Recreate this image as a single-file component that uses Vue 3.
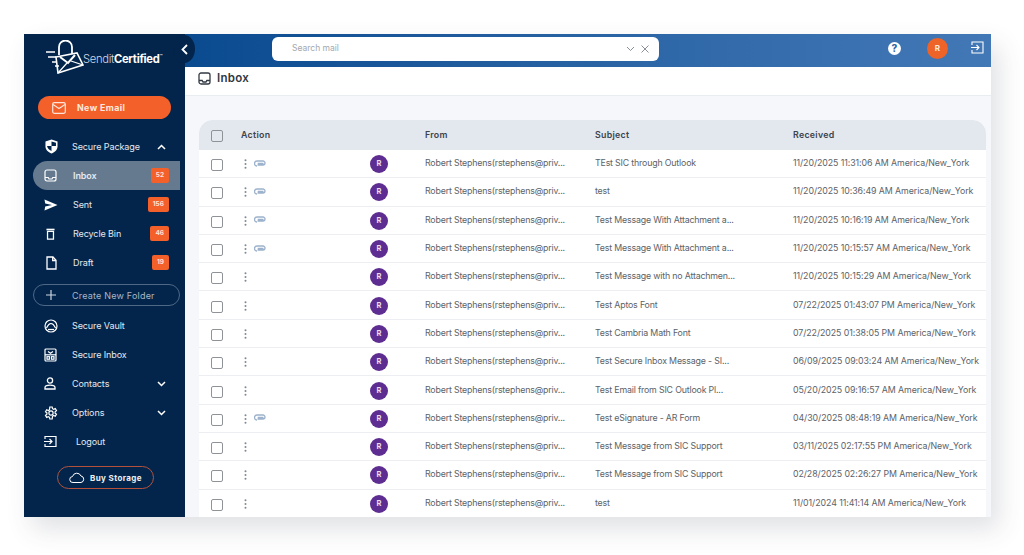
<script setup>
const nav1 = [
  { label: 'Inbox', icon: 'inbox', badge: '52', active: true },
  { label: 'Sent', icon: 'sent', badge: '156' },
  { label: 'Recycle Bin', icon: 'bin', badge: '46' },
  { label: 'Draft', icon: 'draft', badge: '19' },
]
const from = 'Robert Stephens(rstephens@priv...'
const rows = [
  ['TEst SIC through Outlook', '11/20/2025 11:31:06 AM America/New_York', true],
  ['test', '11/20/2025 10:36:49 AM America/New_York', true],
  ['Test Message With Attachment a...', '11/20/2025 10:16:19 AM America/New_York', true],
  ['Test Message With Attachment a...', '11/20/2025 10:15:57 AM America/New_York', true],
  ['Test Message with no Attachmen...', '11/20/2025 10:15:29 AM America/New_York', false],
  ['Test Aptos Font', '07/22/2025 01:43:07 PM America/New_York', false],
  ['Test Cambria Math Font', '07/22/2025 01:38:05 PM America/New_York', false],
  ['Test Secure Inbox Message - SI...', '06/09/2025 09:03:24 AM America/New_York', false],
  ['Test Email from SIC Outlook Pl...', '05/20/2025 09:16:57 AM America/New_York', false],
  ['Test eSignature - AR Form', '04/30/2025 08:48:19 AM America/New_York', true],
  ['Test Message from SIC Support', '03/11/2025 02:17:55 PM America/New_York', false],
  ['Test Message from SIC Support', '02/28/2025 02:26:27 PM America/New_York', false],
  ['test', '11/01/2024 11:41:14 AM America/New_York', false],
]
</script>

<template>
  <div class="page">
    <div class="app">
      <aside class="side">
        <div class="logo">
          <svg width="40" height="34" viewBox="0 0 40 34" fill="none" stroke="#fff" stroke-width="1.600">
            <path d="M15 15V7a6.500 6.500 0 0 1 13 0v7" stroke-width="1.800" />
            <path d="M12 17l21-4 6 12-25 8z" fill="#03254c" />
            <path d="M16 17l8 6 7-8" stroke-width="2" />
            <path d="M14 33l9-10M39 25l-12-4" stroke-width="1.200" />
            <path d="M2 12h9M4 17h8M8 22h5M11 26h4" stroke-width="1.300" />
          </svg>
          <span class="brand"><span class="thin">Sendit</span><b>Certified</b><sup>™</sup></span>
        </div>
        <button class="new-email">
          <svg width="14" height="12" viewBox="0 0 14 12" fill="none" stroke="#ffe5d9" stroke-width="1.200">
            <rect x="0.700" y="0.700" width="12.600" height="10.600" rx="1.500" />
            <path d="M1 2.500l6 4 6-4" />
          </svg>
          <span>New Email</span>
        </button>

        <div class="item pkg">
          <svg class="ic shield" width="13" height="15" viewBox="0 0 14 15">
            <path d="M7 0l6.500 2.200v5c0 3.700-2.800 6.500-6.500 7.800C3.300 13.700.5 10.900.5 7.200v-5z" fill="#fff" />
            <path d="M7 2v5h4.800V3.500zM7 7H2.200c.3 2.500 2.300 4.300 4.800 5.400z" fill="#03254c" />
          </svg>
          <span class="lbl">Secure Package</span>
          <svg class="chev" width="9" height="6" viewBox="0 0 9 6" fill="none" stroke="#fff" stroke-width="1.500"><path d="M1 5l3.500-3.500L8 5" /></svg>
        </div>

        <div class="group">
          <div v-for="n in nav1" :key="n.label" class="sub" :class="{ active: n.active }">
            <svg v-if="n.icon === 'inbox'" class="ic" width="13" height="13" viewBox="0 0 13 13" fill="none" stroke="#fff" stroke-width="1.200">
              <rect x="1" y="1" width="11" height="11" rx="2" /><path d="M1 8.500h3.200l.8 1.500h3l.8-1.500H12" />
            </svg>
            <svg v-else-if="n.icon === 'sent'" class="ic" width="14" height="12" viewBox="0 0 14 12">
              <path d="M0.500 0.500L13.500 6 0.500 11.500 1.200 7.500 8 6 1.200 4.500z" fill="#fff" />
            </svg>
            <svg v-else-if="n.icon === 'bin'" class="ic narrow" width="9" height="12" viewBox="0 0 10 13" fill="none" stroke="#fff" stroke-width="1.400">
              <path d="M0.500 1.500h9" stroke-width="1.800" /><path d="M1.700 3.500h6.600v8.800H1.700z" />
            </svg>
            <svg v-else class="ic narrow" width="11" height="14" viewBox="0 0 11 14" fill="none" stroke="#fff" stroke-width="1.300">
              <path d="M1 1h6l3 3.200V13H1z" /><path d="M6.700 1v3.500H10" />
            </svg>
            <span class="sub-lbl">{{ n.label }}</span>
            <span class="badge">{{ n.badge }}</span>
          </div>
        </div>

        <div class="create">
          <svg width="10" height="10" viewBox="0 0 10 10" stroke="#cdd6e0" stroke-width="1.200"><path d="M5 0v10M0 5h10" /></svg>
          <span>Create New Folder</span>
        </div>

        <div class="item">
          <svg class="ic" width="14" height="14" viewBox="0 0 14 14" fill="none" stroke="#fff" stroke-width="1.200">
            <circle cx="7" cy="7" r="6" /><path d="M2.500 9c1-2 2-4.500 4.500-4.500S10.500 7 11.500 9" /><path d="M4 10.500h6" />
          </svg>
          <span class="lbl">Secure Vault</span>
        </div>
        <div class="item">
          <svg class="ic" width="13" height="14" viewBox="0 0 13 14" fill="none" stroke="#fff" stroke-width="1.200">
            <rect x="1" y="1" width="11" height="12" rx="1" /><path d="M1 6.800h11" /><path d="M4 3.500l2.500 1.700L9 3.500" /><rect x="3" y="8.700" width="2.500" height="2.500" /><rect x="7.500" y="8.700" width="2.500" height="2.500" />
          </svg>
          <span class="lbl">Secure Inbox</span>
        </div>
        <div class="item">
          <svg class="ic" width="12" height="13" viewBox="0 0 12 13" fill="none" stroke="#fff" stroke-width="1.300">
            <circle cx="6" cy="3.500" r="2.600" /><path d="M1 12v-1.500C1 9 2.500 8.200 6 8.200s5 .8 5 2.300V12z" />
          </svg>
          <span class="lbl">Contacts</span>
          <svg class="chev" width="9" height="6" viewBox="0 0 9 6" fill="none" stroke="#fff" stroke-width="1.500"><path d="M1 1l3.500 3.500L8 1" /></svg>
        </div>
        <div class="item">
          <svg class="ic" width="14" height="14" viewBox="0 0 14 14" fill="none" stroke="#fff" stroke-width="1.200">
            <circle cx="7" cy="7" r="2.100" /><path d="M5.800 1h2.400l.3 1.700 1.200.6 1.600-.7 1.200 2-1.400 1.100v1.400l1.400 1.100-1.200 2-1.600-.7-1.200.6L8.200 13H5.800l-.3-1.700-1.200-.6-1.600.7-1.200-2 1.400-1.100V6.900L1.500 5.800l1.200-2 1.600.7 1.200-.6z" />
          </svg>
          <span class="lbl">Options</span>
          <svg class="chev" width="9" height="6" viewBox="0 0 9 6" fill="none" stroke="#fff" stroke-width="1.500"><path d="M1 1l3.500 3.500L8 1" /></svg>
        </div>
        <div class="item">
          <svg class="ic" width="13" height="13" viewBox="0 0 13 13" fill="none" stroke="#fff" stroke-width="1.200">
            <path d="M1 4V1.500h11v10H1V9" /><path d="M0 6.500h8M5.500 4l2.500 2.500L5.500 9" />
          </svg>
          <span class="lbl logout">Logout</span>
        </div>

        <div class="buy">
          <svg width="16" height="11" viewBox="0 0 16 11" fill="none" stroke="#fff" stroke-width="1"><path d="M4 10.500a3 3 0 0 1-.5-6A4.500 4.500 0 0 1 12 4a3.300 3.300 0 0 1 0 6.500z" /></svg>
          <span>Buy Storage</span>
        </div>
      </aside>

      <main class="main">
        <header class="top">
          <button class="collapse">
            <svg width="7" height="11" viewBox="0 0 7 11" fill="none" stroke="#fff" stroke-width="1.800"><path d="M6 1L1.500 5.500 6 10" /></svg>
          </button>
          <div class="search">
            <span class="ph">Search mail</span>
            <svg width="9" height="6" viewBox="0 0 9 6" fill="none" stroke="#8a9099" stroke-width="1"><path d="M1 1l3.500 3.500L8 1" /></svg>
            <svg width="8" height="8" viewBox="0 0 8 8" stroke="#8a9099" stroke-width="1"><path d="M.5.500l7 7M7.500.500l-7 7" /></svg>
          </div>
          <div class="right">
            <span class="help">?</span>
            <span class="me">R</span>
            <svg class="exit" width="13" height="13" viewBox="0 0 13 13" fill="none" stroke="#fff" stroke-width="1.100">
              <path d="M1 4V1h11v11H1V9" /><path d="M0 6.500h8M5.500 4l2.500 2.500L5.500 9" />
            </svg>
          </div>
        </header>

        <div class="title">
          <svg width="13" height="13" viewBox="0 0 13 13" fill="none" stroke="#333a44" stroke-width="1.300">
            <rect x="1" y="1" width="11" height="11" rx="2" /><path d="M1 8.500h3.200l.8 1.500h3l.8-1.500H12" />
          </svg>
          <span>Inbox</span>
        </div>

        <section class="content">
          <div class="table">
            <div class="row head">
              <span class="box"></span>
              <span class="act"><span class="txt">Action</span></span>
              <span class="av-cell"></span>
              <span class="from">From</span>
              <span class="subj">Subject</span>
              <span class="recv">Received</span>
            </div>
            <div v-for="(r, i) in rows" :key="i" class="row">
              <span class="box"></span>
              <span class="act">
                <svg class="kebab" width="3" height="10" viewBox="0 0 3 10" fill="#7d8894"><circle cx="1.500" cy="1.200" r="1" /><circle cx="1.500" cy="5" r="1" /><circle cx="1.500" cy="8.800" r="1" /></svg>
                <svg v-if="r[2]" class="clip" width="12" height="7" viewBox="0 0 12 7" fill="none" stroke="#9db2cc" stroke-width="1.300">
                  <path d="M9.500 3.500H3.700M3.500 5H9a2 2 0 0 0 0-4H3a2.500 2.500 0 0 0 0 5" />
                </svg>
              </span>
              <span class="av-cell"><span class="avatar">R</span></span>
              <span class="from">{{ from }}</span>
              <span class="subj">{{ r[0] }}</span>
              <span class="recv">{{ r[1] }}</span>
            </div>
          </div>
        </section>
      </main>
    </div>
  </div>
</template>

<style>
html, body { margin: 0; background: #fff; }
</style>

<style scoped>
.page { width: 1024px; height: 555px; padding: 34px 0 0 24px; box-sizing: border-box; overflow: hidden; font-family: Inter, "Liberation Sans", sans-serif; }
.app { width: 967px; height: 483px; display: flex; overflow: hidden; box-shadow: 8px 12px 24px rgba(60, 70, 90, .16); }
.side { width: 161px; flex: none; background: #03254c; color: #fff; display: flex; flex-direction: column; padding-left: 9px; box-sizing: border-box; }
.logo { height: 46px; margin-left: 11px; display: flex; align-items: center; }
.brand { font-size: 11.200px; letter-spacing: -.3px; margin-left: -1px; padding-top: 4px; white-space: nowrap; }
.thin { font-weight: 300; color: #cfd8e3; }
.brand b { font-weight: 700; }
.brand sup { font-size: 5px; }
.new-email { width: 133px; height: 23px; margin: 16px 0 0 5px; background: #f4602a; border: 0; border-radius: 12px; color: #ffe9df; display: flex; align-items: center; gap: 11px; padding: 0 0 0 14px; font: 700 8.800px Inter, sans-serif; letter-spacing: .4px; box-sizing: border-box; }
.item { height: 29px; display: flex; align-items: center; position: relative; color: #e4e9ef; font-size: 9px; }
.pkg { margin-top: 13px; }
.ic { position: absolute; left: 11px; }
.ic.shield { left: 12px; }
.ic.narrow { left: 13px; }
.lbl { margin-left: 39px; letter-spacing: -.1px; white-space: nowrap; }
.logout { margin-left: 43px; }
.chev { position: absolute; left: 124px; }
.group { display: flex; flex-direction: column; }
.sub { height: 29px; width: 147px; display: flex; align-items: center; position: relative; color: #e4e9ef; font-size: 9px; border-radius: 15px 0 0 15px; box-sizing: border-box; }
.sub.active { background: #667a8f; font-weight: 600; }
.sub-lbl { margin-left: 40px; letter-spacing: -.1px; }
.badge { position: absolute; right: 11px; background: #f4602a; color: #ffe3d6; font-size: 6.500px; font-weight: 700; padding: 0 5px; height: 15px; line-height: 15px; border-radius: 2px; }
.create { width: 147px; height: 22px; margin: 7px 0 5px; border: 1px solid #4f6885; border-radius: 12px; box-sizing: border-box; display: flex; align-items: center; gap: 16px; padding-left: 12px; font-size: 9px; color: #a9b6c5; letter-spacing: .2px; }
.buy { width: 97px; height: 23px; margin: 10px 0 0 24px; border: 1px solid #b5513a; border-radius: 12px; box-sizing: border-box; display: flex; align-items: center; gap: 5px; padding-left: 11px; font-size: 8px; font-weight: 700; letter-spacing: .4px; color: #eef1f4; }
.main { flex: 1; display: flex; flex-direction: column; min-width: 0; }
.top { height: 33px; flex: none; background: linear-gradient(90deg, #0a4a8f, #2f68a8 60%, #4378b6); display: flex; align-items: center; position: relative; }
.collapse { position: absolute; left: -12px; top: 1px; width: 22px; height: 28px; border: 0; padding: 0; border-radius: 50%; background: #03254c; display: flex; align-items: center; justify-content: center; }
.search { width: 387px; height: 24px; margin-left: 87px; margin-top: -4px; background: #fff; border-radius: 6px; display: flex; align-items: center; gap: 6px; padding: 0 10px 0 20px; box-sizing: border-box; }
.ph { flex: 1; font-size: 8.500px; color: #a3a8ae; margin-bottom: 1px; }
.right { position: absolute; left: 703px; top: 4px; display: flex; align-items: center; }
.help { width: 13px; height: 13px; border-radius: 50%; background: #fff; color: #2f68a8; font: 800 10px/13px Inter, sans-serif; text-align: center; }
.me { width: 21px; height: 21px; border-radius: 50%; background: #ee6327; color: #ffe9df; font-size: 8px; font-weight: 700; text-align: center; line-height: 21px; margin: 0 23px 0 26px; }
.exit { margin-top: -2px; }
.title { height: 29px; flex: none; background: #fff; border-bottom: 1px solid #e9ecf0; display: flex; align-items: center; gap: 6px; padding: 0 0 6px 13px; box-sizing: border-box; font-size: 11.500px; font-weight: 600; letter-spacing: .3px; color: #30373f; }
.content { flex: 1; background: #f5f7fa; padding: 24px 5px 0 14px; min-height: 0; overflow: hidden; }
.table { background: #fff; border-radius: 14px 14px 0 0; overflow: hidden; }
.row { height: 28.300px; display: flex; align-items: center; font-size: 8.800px; color: #5c6268; border-bottom: 1px solid #eceef1; box-sizing: border-box; white-space: nowrap; }
.head { height: 30px; background: #e3e7ee; color: #3c434c; font-weight: 600; border: 0; }
.box { width: 12px; height: 12px; border: 1.600px solid #8f9398; border-radius: 2px; box-sizing: border-box; margin: 3px 0 0 12px; flex: none; background: #fff; }
.head .box { background: transparent; margin-top: 2px; }
.act { width: 129px; margin-left: 18px; flex: none; display: flex; align-items: center; gap: 7px; }
.txt { margin-bottom: 2px; letter-spacing: .3px; }
.row:not(.head) .act { padding-left: 3px; box-sizing: border-box; }
.kebab { margin-top: 1px; }
.clip { margin-bottom: 1px; }
.av-cell { width: 55px; flex: none; }
.avatar { display: block; width: 18px; height: 18px; border-radius: 50%; background: #5e2d91; color: #e9e0f2; font-size: 7.500px; font-weight: 700; line-height: 18px; text-align: center; margin-top: 1px; }
.from { width: 170px; flex: none; margin-bottom: 2px; letter-spacing: -.17px; }
.subj { width: 198px; flex: none; margin-bottom: 2px; letter-spacing: -.17px; }
.recv { flex: 1; margin-bottom: 2px; letter-spacing: -.07px; }
.head .from, .head .subj, .head .recv { letter-spacing: .3px; }
</style>
